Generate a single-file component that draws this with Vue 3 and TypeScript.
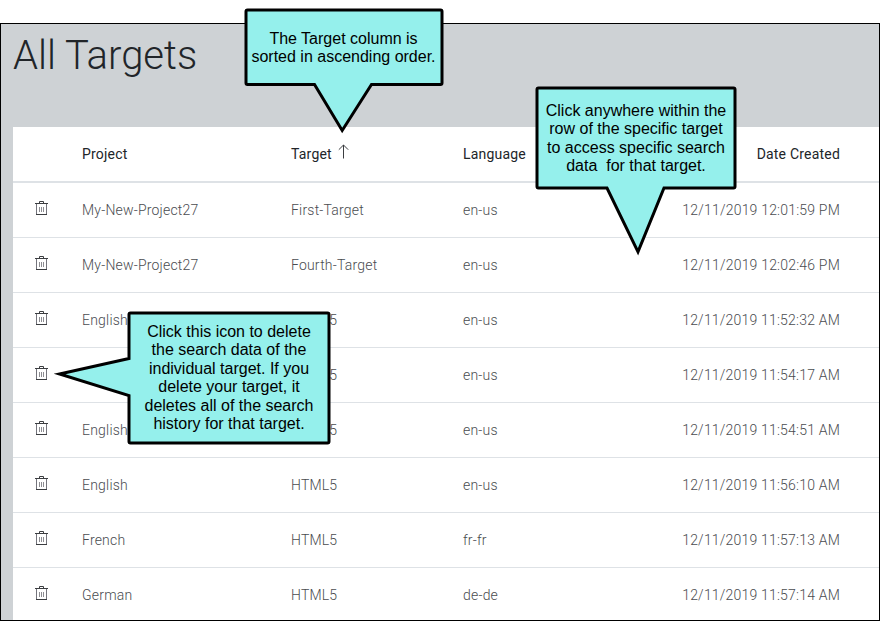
<script setup lang="ts">
interface TargetRow {
  project: string
  target: string
  language: string
  created: string
}

interface Callout {
  name: string
  lines: string[]
  width: number
  height: number
  path: string
}

const rows: TargetRow[] = [
  { project: 'My-New-Project27', target: 'First-Target', language: 'en-us', created: '12/11/2019 12:01:59 PM' },
  { project: 'My-New-Project27', target: 'Fourth-Target', language: 'en-us', created: '12/11/2019 12:02:46 PM' },
  { project: 'English', target: 'HTML5', language: 'en-us', created: '12/11/2019 11:52:32 AM' },
  { project: 'English', target: 'HTML5', language: 'en-us', created: '12/11/2019 11:54:17 AM' },
  { project: 'English', target: 'HTML5', language: 'en-us', created: '12/11/2019 11:54:51 AM' },
  { project: 'English', target: 'HTML5', language: 'en-us', created: '12/11/2019 11:56:10 AM' },
  { project: 'French', target: 'HTML5', language: 'fr-fr', created: '12/11/2019 11:57:13 AM' },
  { project: 'German', target: 'HTML5', language: 'de-de', created: '12/11/2019 11:57:14 AM' },
]

const callouts: Callout[] = [
  {
    name: 'sorting',
    lines: ['The Target column is', 'sorted in ascending order.'],
    width: 200,
    height: 127,
    path: 'M3.5 2H196.5Q198 2 198 3.5V75Q198 76.5 196.5 76.5H127.5L98.2 122.5L70.5 76.5H3.5Q2 76.5 2 75V3.5Q2 2 3.5 2Z',
  },
  {
    name: 'access',
    lines: ['Click anywhere within the', 'row of the specific target', 'to access specific search', 'data\u00a0 for that target.'],
    width: 202,
    height: 171,
    path: 'M3.5 2H198.5Q200 2 200 3.5V100.5Q200 102 198.5 102H129L103 165.8L72 102H3.5Q2 102 2 100.5V3.5Q2 2 3.5 2Z',
  },
  {
    name: 'delete',
    lines: ['Click this icon to delete', 'the search data of the', 'individual target. If you', 'delete your target, it', 'deletes all of the search', 'history for that target.'],
    width: 278,
    height: 134,
    path: 'M77.5 2H274.5Q276 2 276 3.5V130.5Q276 132 274.5 132H77.5Q76 132 76 130.5V84.5L6.5 63L76 47.5V3.5Q76 2 77.5 2Z',
  },
]
</script>

<template>
  <div class="page">
    <main class="frame">
      <h1 class="title">All Targets</h1>
      <section class="table">
        <div class="row head">
          <span></span>
          <span>Project</span>
          <span class="sorted">Target
            <svg class="arrow" width="11" height="15" viewBox="0 0 11 15">
              <path d="M5.5 14.5V1M.8 5.7L5.5 1L10.2 5.7" />
            </svg>
          </span>
          <span>Language</span>
          <span class="date">Date Created</span>
        </div>
        <div v-for="(row, i) in rows" :key="i" class="row">
          <span class="action">
            <svg class="trash" width="13" height="15" viewBox="0 0 13 15">
              <path d="M4.5 3V1.5H8.5V3M0 3.5H13M1 14.5H12" />
              <path class="side" d="M1.5 4V14M11.5 4V14" />
              <path class="bar" d="M4.5 7V12M6.5 7V12M8.5 7V12" />
            </svg>
          </span>
          <span>{{ row.project }}</span>
          <span>{{ row.target }}</span>
          <span>{{ row.language }}</span>
          <span class="date">{{ row.created }}</span>
        </div>
      </section>
    </main>

    <aside v-for="c in callouts" :key="c.name" class="callout" :class="c.name">
      <svg class="bubble" :width="c.width" :height="c.height" :viewBox="`0 0 ${c.width} ${c.height}`">
        <path :d="c.path" />
      </svg>
      <p class="note">
        <span v-for="line in c.lines" :key="line">{{ line }}</span>
      </p>
    </aside>
  </div>
</template>

<style>
body {
  margin: 0;
  background: #fff;
}
</style>

<style scoped>
.page {
  position: relative;
  box-sizing: border-box;
  width: 880px;
  height: 621px;
  padding-top: 23px;
  overflow: hidden;
  font-family: Roboto, "Liberation Sans", sans-serif;
}

.frame {
  box-sizing: border-box;
  height: 598px;
  padding-left: 12px;
  border: 1px solid #000;
  background: #ced2d5;
  overflow: hidden;
}

.title {
  height: 103px;
  margin: 0;
  box-sizing: border-box;
  padding-top: 8px;
  font-size: 40px;
  line-height: 48px;
  font-weight: 300;
  color: #212529;
}

.table {
  background: #fff;
}

.row {
  display: grid;
  grid-template-columns: 69px 209px 172px 1fr 240px;
  align-items: center;
  box-sizing: border-box;
  height: 55px;
  padding-right: 39px;
  border-bottom: 1px solid #dee2e6;
  font-size: 14px;
  line-height: 20px;
  font-weight: 300;
  letter-spacing: 0.2px;
  color: #4a4c50;
  white-space: nowrap;
}

.head {
  height: 56px;
  border-bottom-width: 2px;
  font-weight: 400;
  color: #212529;
}

.sorted {
  display: flex;
  gap: 6px;
}

.date {
  text-align: right;
}

.action {
  padding-left: 22px;
  padding-bottom: 6px;
  line-height: 0;
}

.arrow,
.trash {
  fill: none;
  stroke: #3b3d40;
  stroke-width: 1;
}

.side {
  stroke: #74747c;
}

.bar {
  stroke: #8d8d92;
}

.callout {
  position: absolute;
  display: flex;
  justify-content: center;
}

.sorting {
  left: 244px;
  top: 8px;
  width: 199px;
  padding-top: 22px;
}

.access {
  left: 535px;
  top: 86px;
  width: 202px;
  padding-top: 16px;
}

.delete {
  left: 53px;
  top: 311px;
  width: 200px;
  padding: 12px 0 0 76px;
}

.bubble {
  position: absolute;
  left: 0;
  top: 0;
  fill: #95f0ec;
  stroke: #000;
  stroke-width: 3;
  stroke-linejoin: miter;
}

.note {
  position: relative;
  display: flex;
  flex-direction: column;
  align-items: center;
  margin: 0;
  font-family: "Liberation Sans", Arial, sans-serif;
  font-size: 16px;
  line-height: 18.4px;
  color: #000;
  white-space: nowrap;
}
</style>
